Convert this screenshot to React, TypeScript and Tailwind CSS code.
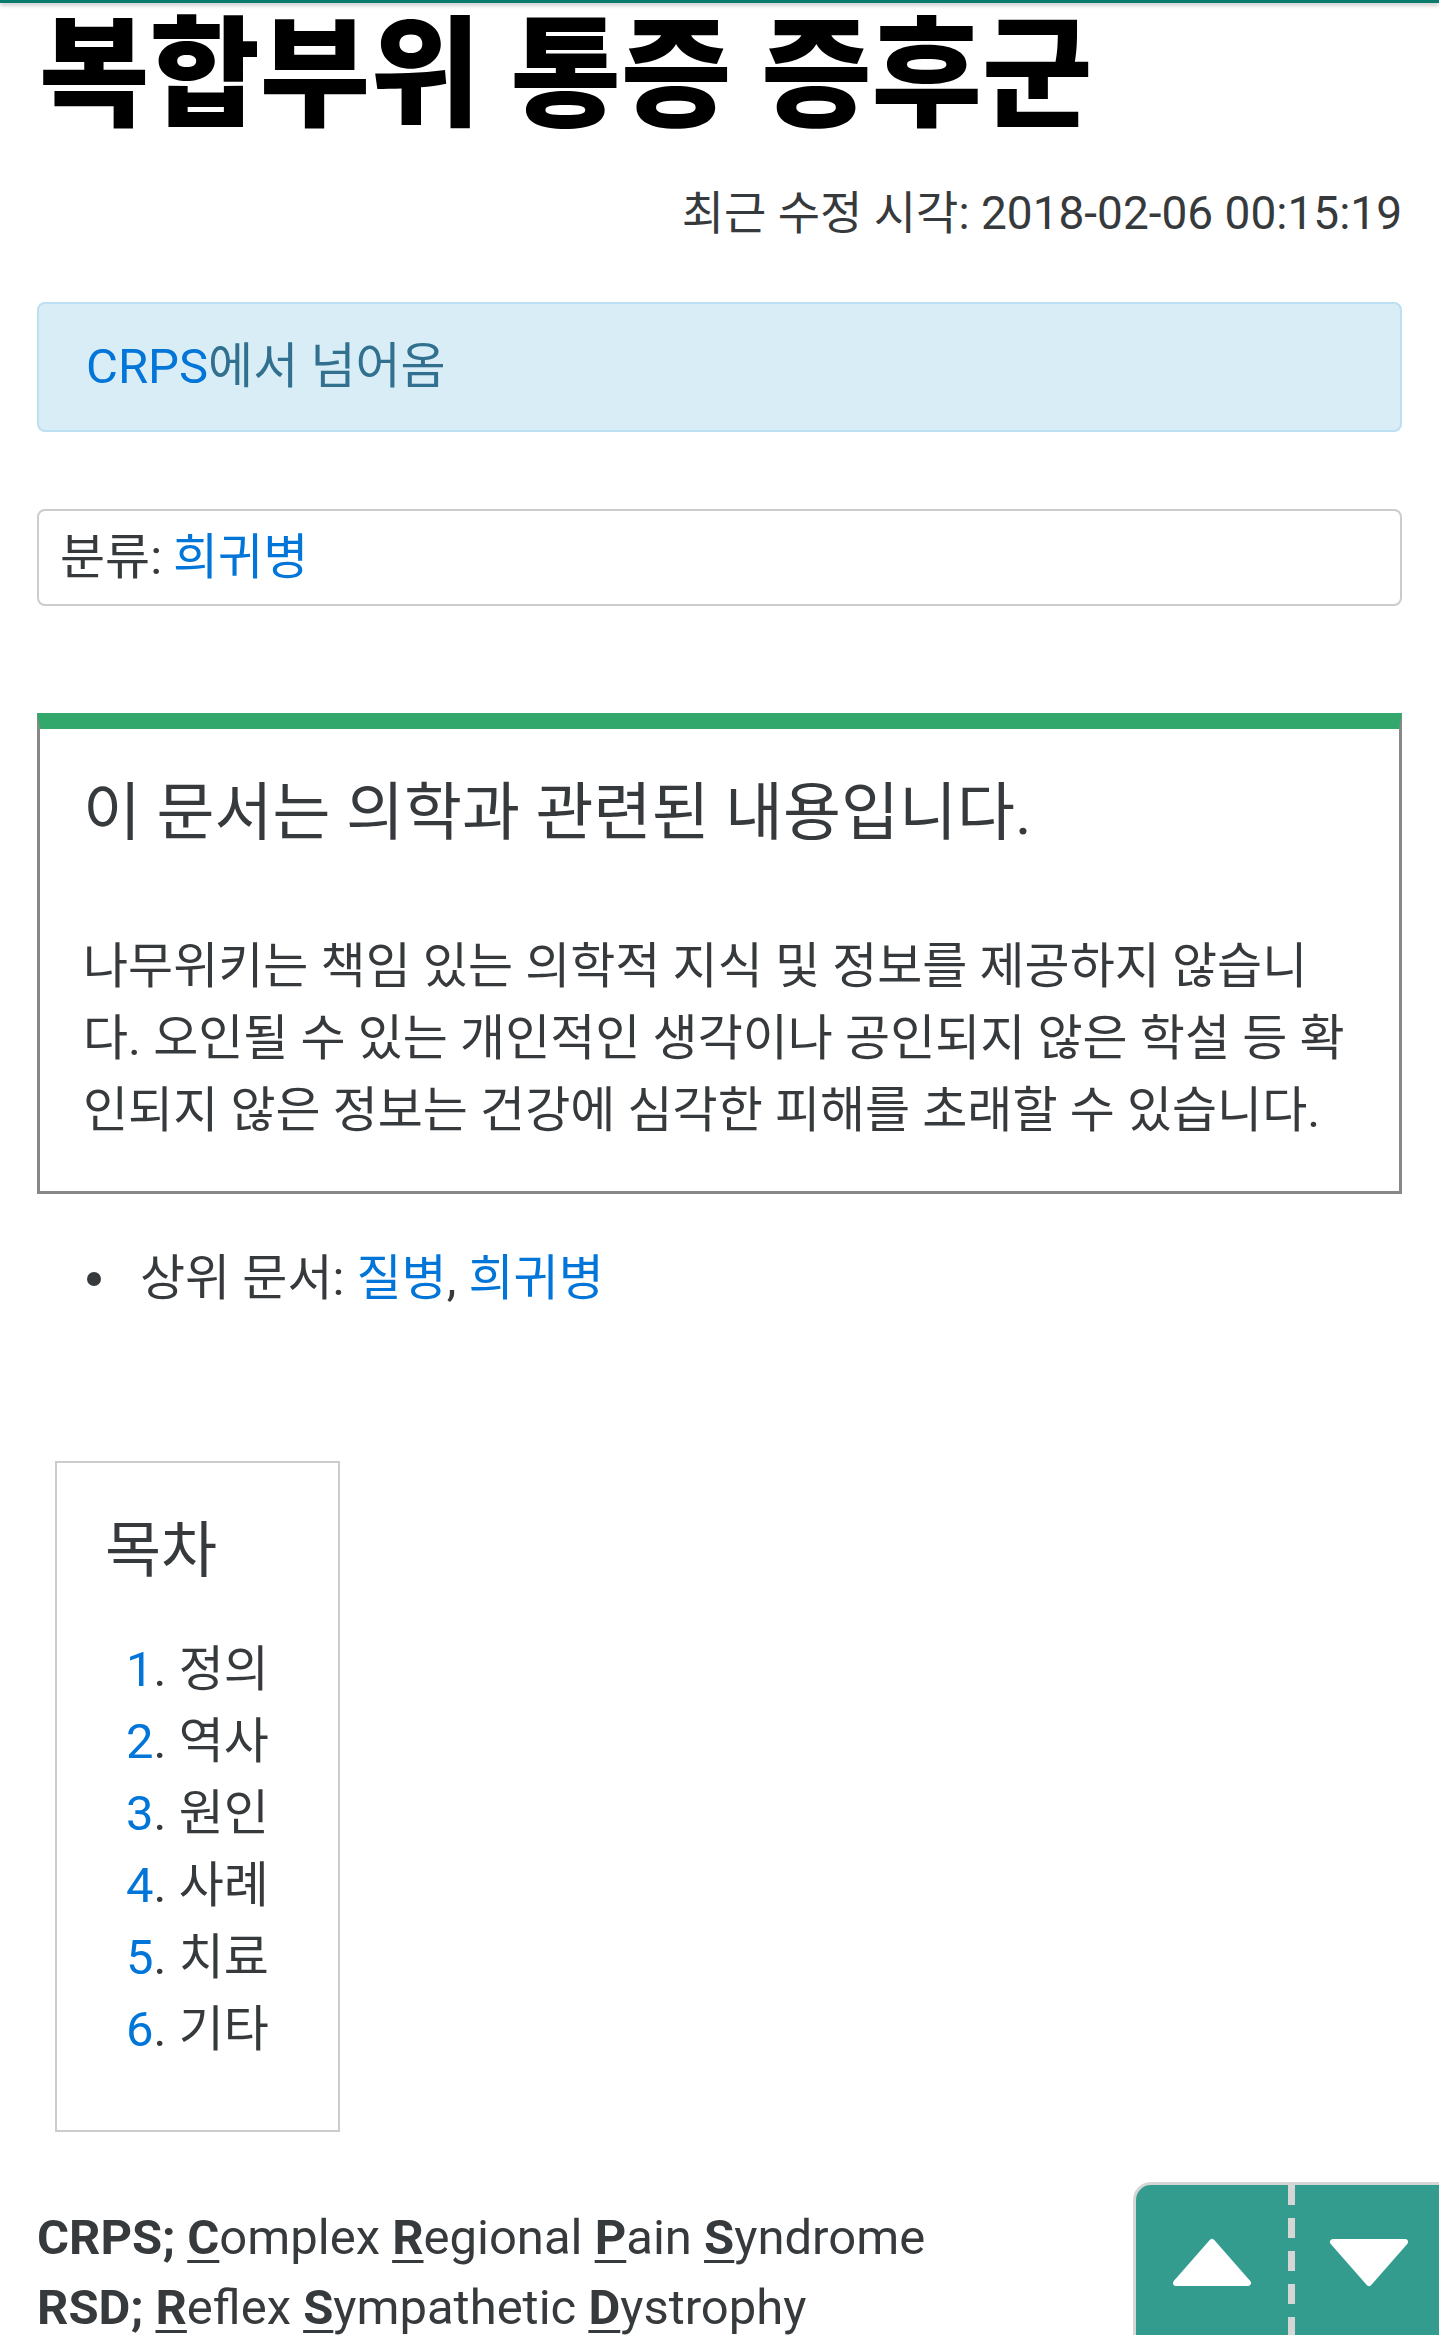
import React from 'react';

const toc = ['정의', '역사', '원인', '사례', '치료', '기타'];

function Initial({ children }: { children: React.ReactNode }) {
  return <span className="font-bold underline underline-offset-[6px] decoration-[3px]">{children}</span>;
}

export default function App() {
  return (
    <div className="relative h-[2335px] overflow-hidden bg-white text-[#373a3c] font-[Roboto,'Noto_Sans_CJK_KR',sans-serif]">
      {/* top bar */}
      <div className="h-[3px] bg-[#0a7a6c] shadow-[0_2px_4px_rgba(0,0,0,0.3)]" />

      <div className="px-[37px]">
        <h1 className="mt-[8px] ml-[2px] text-[120px] leading-[130px] font-black text-black">
          복합부위 통증 증후군
        </h1>

        <p className="mt-[42px] text-right text-[46px] leading-[60px]">최근 수정 시각: 2018-02-06 00:15:19</p>

        {/* redirect notice */}
        <div className="mt-[59px] flex h-[130px] items-center rounded-[8px] border-2 border-[#bcdff1] bg-[#d9edf7] pl-[47px] text-[49px] text-[#31708f]">
          <span className="text-[#0275d8]">CRPS</span>에서 넘어옴
        </div>

        {/* category */}
        <div className="mt-[77px] flex h-[97px] items-center rounded-[8px] border-2 border-[#ccc] pl-[21px] text-[49px]">
          분류: <span className="ml-[11px] text-[#0275d8]">희귀병</span>
        </div>

        {/* medical warning */}
        <div className="mt-[107px] border-[3px] border-t-[16px] border-[#888] border-t-[#33a86d] pt-[40px] pr-[50px] pb-[44px] pl-[43px]">
          <p className="text-[63px] leading-[87px]">이 문서는 의학과 관련된 내용입니다.</p>
          <p className="mt-[75px] text-[49px] leading-[72px] break-all">
            나무위키는 책임 있는 의학적 지식 및 정보를 제공하지 않습니다. 오인될 수 있는 개인적인 생각이나 공인되지 않은 학설 등 확인되지 않은 정보는 건강에 심각한 피해를 초래할 수 있습니다.
          </p>
        </div>

        {/* parent docs */}
        <div className="mt-[49px] flex items-center text-[49px] leading-[72px]">
          <span className="ml-[50px] h-[14px] w-[14px] rounded-full bg-[#373a3c]" />
          <span className="ml-[39px]">
            상위 문서: <span className="text-[#0275d8]">질병</span>, <span className="text-[#0275d8]">희귀병</span>
          </span>
        </div>

        {/* table of contents */}
        <div className="mt-[146px] ml-[18px] w-[285px] border-2 border-[#ccc] pt-[45px] pb-[64px]">
          <p className="pl-[48px] text-[61px] leading-[87px]">목차</p>
          <ol className="mt-[39px] pl-[69px] text-[49px] leading-[72px]">
            {toc.map((item, i) => (
              <li key={item}>
                <span className="text-[#0275d8]">{i + 1}</span>. {item}
              </li>
            ))}
          </ol>
        </div>

        {/* abbreviations */}
        <div className="mt-[71px] text-[49px] leading-[70px]">
          <p>
            <b>CRPS;</b> <Initial>C</Initial>omplex <Initial>R</Initial>egional <Initial>P</Initial>ain{' '}
            <Initial>S</Initial>yndrome
          </p>
          <p>
            <b>RSD;</b> <Initial>R</Initial>eflex <Initial>S</Initial>ympathetic <Initial>D</Initial>ystrophy
          </p>
        </div>
      </div>

      {/* floating scroll buttons */}
      <div className="absolute top-[2182px] left-[1133px] flex h-[200px] w-[330px] rounded-tl-[18px] border-t-[3px] border-l-[3px] border-[#d6d6d6] bg-[#349b8f]">
        <div className="flex w-[152px] justify-center pt-[53px]">
          <svg width="80" height="49" viewBox="0 0 80 49">
            <polygon points="40,4 76,45 4,45" fill="#fff" stroke="#fff" strokeWidth="6" strokeLinejoin="round" />
          </svg>
        </div>
        <div className="w-[7px] bg-[repeating-linear-gradient(to_bottom,#d6d6d6_0_20px,transparent_20px_33px)]" />
        <div className="flex w-[147px] justify-center pt-[53px]">
          <svg width="80" height="49" viewBox="0 0 80 49">
            <polygon points="4,4 76,4 40,45" fill="#fff" stroke="#fff" strokeWidth="6" strokeLinejoin="round" />
          </svg>
        </div>
      </div>
    </div>
  );
}
